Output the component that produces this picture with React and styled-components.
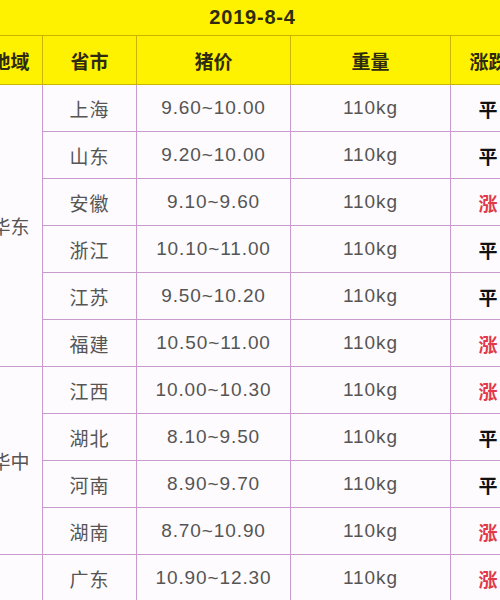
import React from "react";
import styled, { createGlobalStyle } from "styled-components";

const Global = createGlobalStyle`
  html, body { margin: 0; padding: 0; background: #ffffff; }
  body { font-family: "Liberation Sans", "Noto Sans CJK SC", sans-serif; }
`;

const Viewport = styled.div`
  width: 500px;
  height: 600px;
  overflow: hidden;
  background: #fdfbfd;
`;

const Table = styled.table`
  margin-left: -22px;
  border-collapse: collapse;
  table-layout: fixed;
  width: 548px;
`;

const TitleCell = styled.th`
  height: 35px;
  padding: 0;
  background: #fff200;
  border-bottom: 1px solid #c9b400;
  color: #2e2b10;
  font-size: 20px;
  font-weight: bold;
  letter-spacing: 0.8px;
  text-align: center;
  vertical-align: middle;
`;

const HeadCell = styled.th`
  height: 48px;
  padding: 0;
  background: #fff200;
  border: 1px solid #c9b400;
  border-top: none;
  color: #2e2b10;
  font-size: 19px;
  font-weight: bold;
  text-align: center;
  vertical-align: middle;
`;

const Cell = styled.td`
  height: 46px;
  padding: 0;
  border: 1px solid #c99acd;
  color: #555555;
  font-size: 19px;
  letter-spacing: 0.9px;
  text-align: center;
  vertical-align: middle;
  background: #fdfbfd;
`;

const RegionCell = styled(Cell)`
  letter-spacing: 0;
`;

const TrendCell = styled(Cell)`
  font-weight: bold;
  color: ${(p) => (p.$up ? "#e2384a" : "#111111")};
`;

const groups = [
  {
    region: "华东",
    rows: [
      ["上海", "9.60~10.00", "平"],
      ["山东", "9.20~10.00", "平"],
      ["安徽", "9.10~9.60", "涨"],
      ["浙江", "10.10~11.00", "平"],
      ["江苏", "9.50~10.20", "平"],
      ["福建", "10.50~11.00", "涨"],
    ],
  },
  {
    region: "华中",
    rows: [
      ["江西", "10.00~10.30", "涨"],
      ["湖北", "8.10~9.50", "平"],
      ["河南", "8.90~9.70", "平"],
      ["湖南", "8.70~10.90", "涨"],
    ],
  },
  {
    region: "",
    rows: [["广东", "10.90~12.30", "涨"]],
  },
];

export default function App() {
  return (
    <Viewport>
      <Global />
      <Table>
        <colgroup>
          <col style={{ width: 64 }} />
          <col style={{ width: 94 }} />
          <col style={{ width: 154 }} />
          <col style={{ width: 160 }} />
          <col style={{ width: 76 }} />
        </colgroup>
        <thead>
          <tr>
            <TitleCell colSpan={5}>2019-8-4</TitleCell>
          </tr>
          <tr>
            <HeadCell>地域</HeadCell>
            <HeadCell>省市</HeadCell>
            <HeadCell>猪价</HeadCell>
            <HeadCell>重量</HeadCell>
            <HeadCell>涨跌</HeadCell>
          </tr>
        </thead>
        <tbody>
          {groups.map((g, gi) =>
            g.rows.map((r, i) => (
              <tr key={gi + r[0]}>
                {i === 0 && (
                  <RegionCell rowSpan={g.rows.length}>{g.region}</RegionCell>
                )}
                <Cell>{r[0]}</Cell>
                <Cell>{r[1]}</Cell>
                <Cell>110kg</Cell>
                <TrendCell $up={r[2] === "涨"}>{r[2]}</TrendCell>
              </tr>
            ))
          )}
        </tbody>
      </Table>
    </Viewport>
  );
}
